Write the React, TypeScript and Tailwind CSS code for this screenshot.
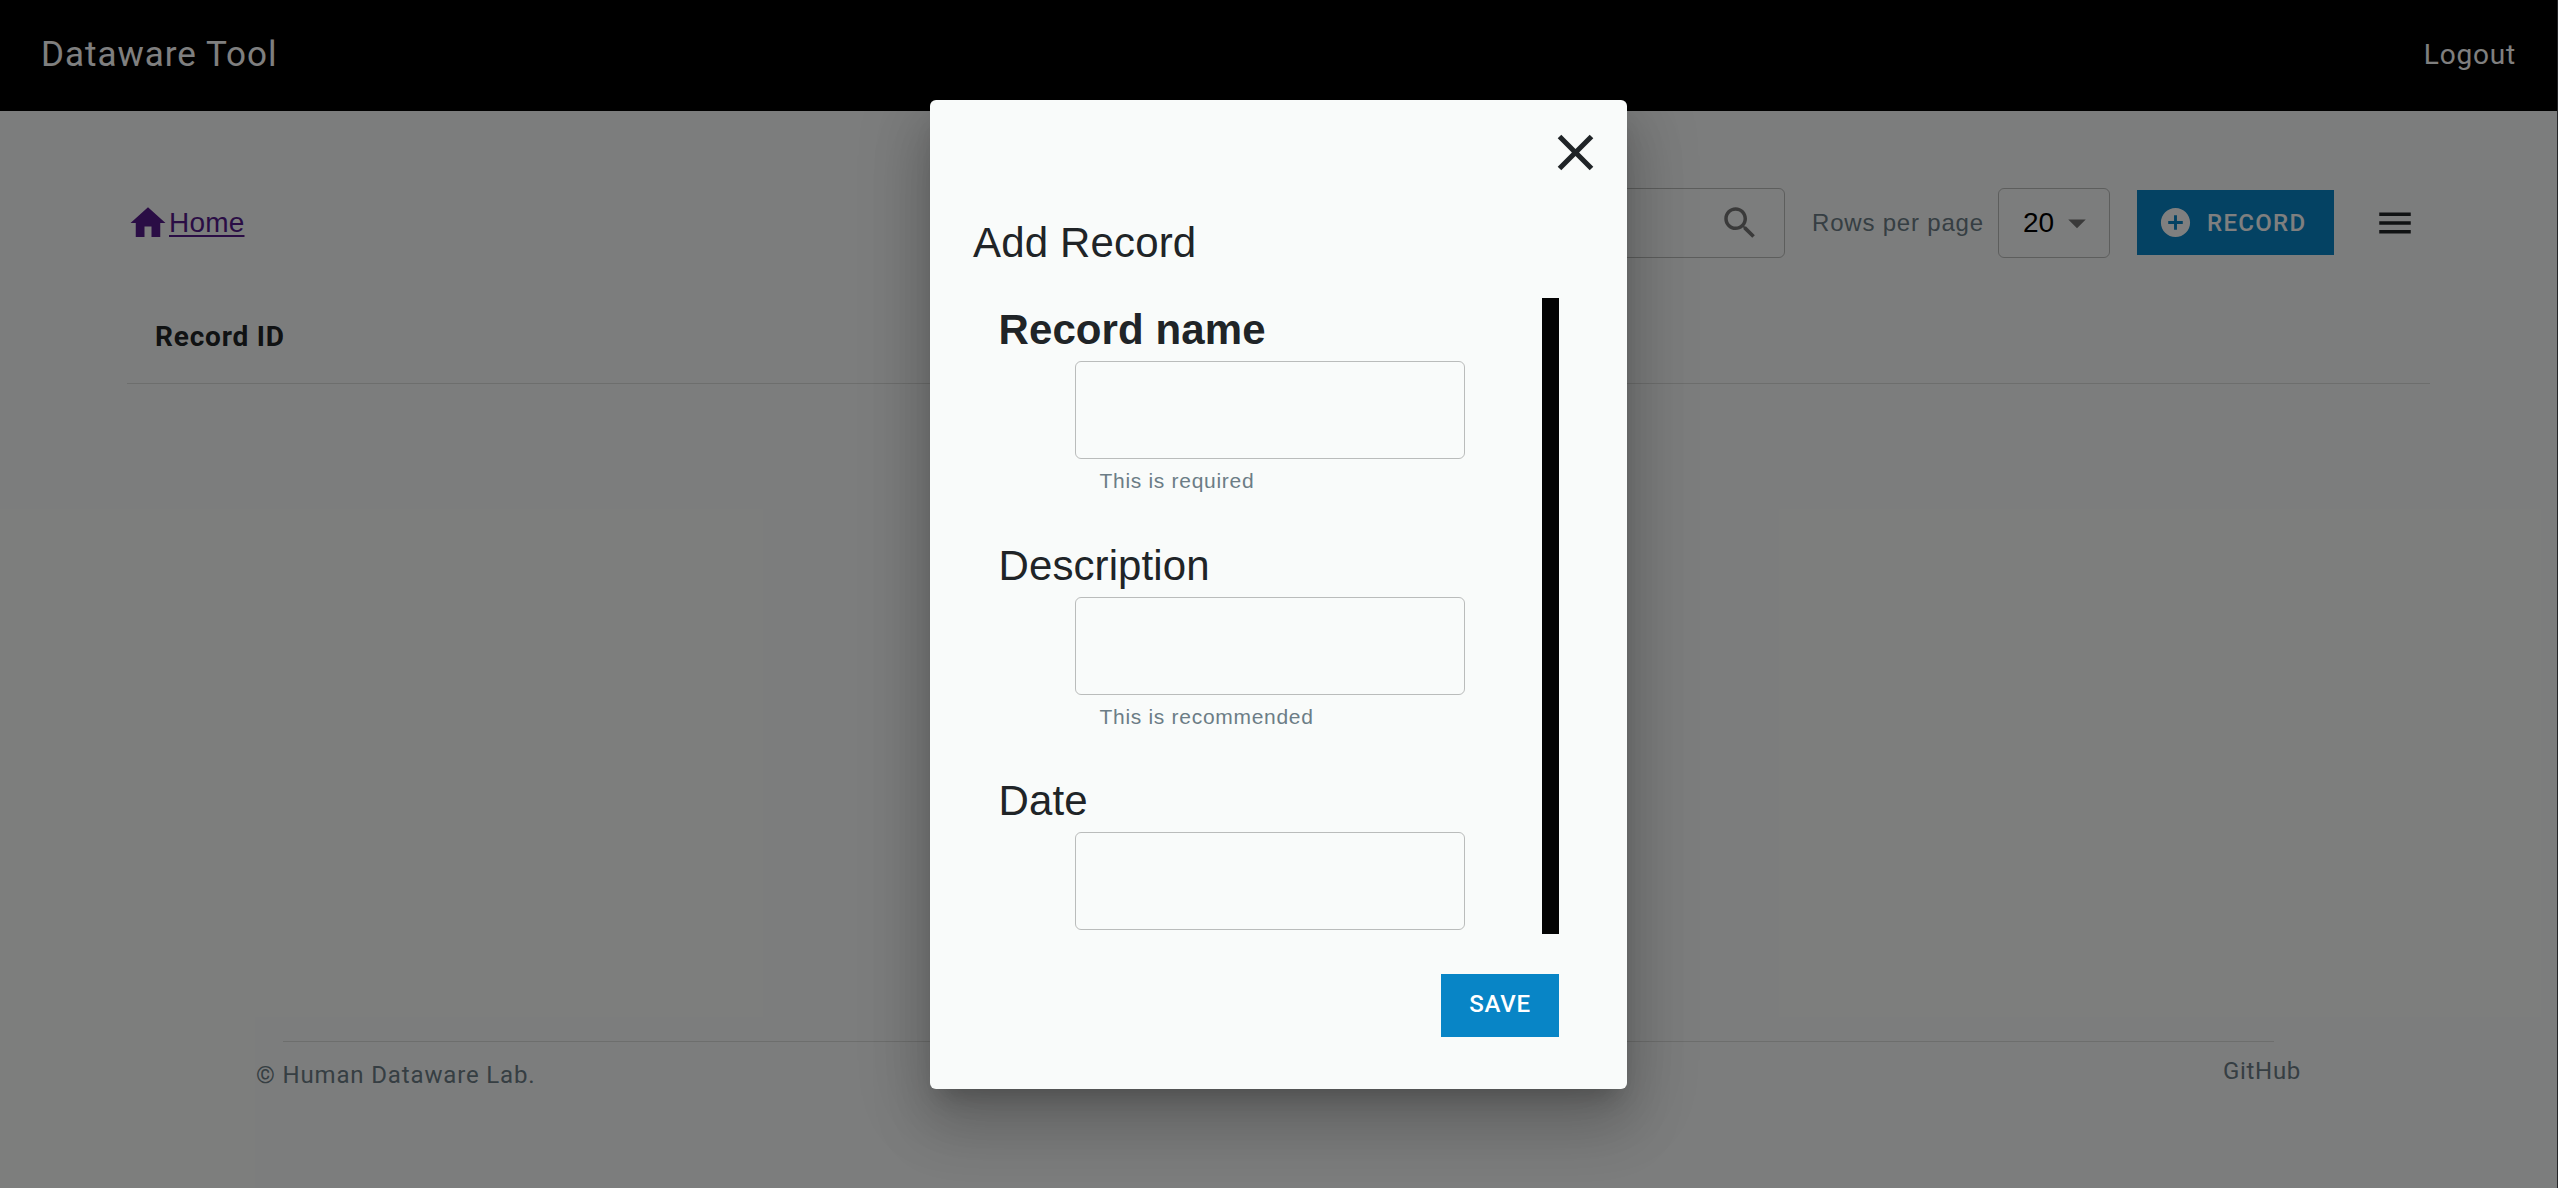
import type { ReactNode } from "react";

function Icon({ d, className }: { d: string; className: string }) {
  return (
    <svg viewBox="0 0 24 24" fill="currentColor" className={`shrink-0 ${className}`}>
      <path d={d} />
    </svg>
  );
}

const ICONS = {
  home: "M10 20v-6h4v6h5v-8h3L12 3 2 12h3v8z",
  search:
    "M15.5 14h-.79l-.28-.27C15.41 12.59 16 11.11 16 9.5 16 5.91 13.09 3 9.5 3S3 5.91 3 9.5 5.91 16 9.5 16c1.61 0 3.09-.59 4.23-1.57l.27.28v.79l5 4.99L20.49 19l-4.99-5zm-6 0C7.01 14 5 11.99 5 9.5S7.01 5 9.5 5 14 7.01 14 9.5 11.99 14 9.5 14z",
  dropDown: "M7 10l5 5 5-5z",
  addCircle:
    "M12 2C6.48 2 2 6.48 2 12s4.48 10 10 10 10-4.48 10-10S17.52 2 12 2zm5 11h-4v4h-2v-4H7v-2h4V7h2v4h4v2z",
  menu: "M3 18h18v-2H3v2zm0-5h18v-2H3v2zm0-7v2h18V6H3z",
  close:
    "M19 6.41L17.59 5 12 10.59 6.41 5 5 6.41 10.59 12 5 17.59 6.41 19 12 13.41 17.59 19 19 17.59 13.41 12z",
};

function Header() {
  return (
    <header className="flex h-[111px] shrink-0 items-center justify-between bg-black pr-[41px] pl-[41px] font-[Roboto,sans-serif] text-white">
      <h1 className="pb-[2px] text-[35px] leading-[48px] tracking-[1px]">Dataware Tool</h1>
      <a className="pb-[2px] text-[28px] leading-[40px] tracking-[0.8px]">Logout</a>
    </header>
  );
}

function Toolbar() {
  return (
    <div className="flex h-[70px] items-center justify-between">
      <a className="flex items-center text-[28px] leading-[40px] tracking-[0.2px] text-[#551a8b]">
        <Icon d={ICONS.home} className="size-[42px]" />
        <span className="underline decoration-2 underline-offset-[3px]">Home</span>
      </a>
      <div className="flex items-center pr-[13px]">
        <div className="flex h-[70px] w-[420px] items-center justify-end rounded-[6px] border border-black/25 pr-[23px] text-[#757575]">
          <Icon d={ICONS.search} className="size-[42px]" />
        </div>
        <span className="ml-[27px] w-[186px] text-[24px] leading-[36px] tracking-[0.8px] whitespace-nowrap text-[#6c7d86]">
          Rows per page
        </span>
        <div className="flex h-[70px] w-[112px] items-center justify-between rounded-[6px] border border-black/25 pr-[11px] pl-[24px]">
          <span className="text-[28px] leading-[40px] text-black">20</span>
          <Icon d={ICONS.dropDown} className="size-[42px] text-[#757575]" />
        </div>
        <button className="mb-px ml-[27px] flex h-[65px] w-[197px] items-center bg-[#0885c6] pl-[21px] font-[Roboto,sans-serif] text-[24px] leading-[42px] font-medium tracking-[1.3px] text-white">
          <Icon d={ICONS.addCircle} className="mr-[14px] size-[35px]" />
          RECORD
        </button>
        <Icon d={ICONS.menu} className="ml-[40px] size-[42px] text-[#202427]" />
      </div>
    </div>
  );
}

function RecordTable() {
  return (
    <div className="mt-[32px] -mr-px flex h-[94px] items-center border-b border-black/12 pl-[28px]">
      <span className="pt-[1px] font-[Roboto,sans-serif] text-[28px] leading-[40px] font-bold tracking-[0.8px]">
        Record ID
      </span>
    </div>
  );
}

function Footer() {
  return (
    <footer className="mx-[256px] mt-auto h-[147px] font-[Roboto,sans-serif] text-[24px] leading-[36px] text-[#6c7d86]">
      <div className="mr-[27px] ml-[27px] h-px bg-black/12" />
      <div className="flex items-start justify-between">
        <span className="mt-[15px] tracking-[0.85px]">© Human Dataware Lab.</span>
        <span className="mt-[11px] tracking-[0.7px]">GitHub</span>
      </div>
    </footer>
  );
}

function Field({ label, helper }: { label: ReactNode; helper?: string }) {
  return (
    <div className="h-[235.5px] shrink-0 pl-[25px]">
      <div className="h-[55px] pl-[0.5px] text-[42px] leading-[48px] tracking-[0.1px]">{label}</div>
      <div className="ml-[77px] w-[390px]">
        <div className="h-[98px] rounded-[6px] border border-black/25" />
        {helper && (
          <p className="mt-[4px] pl-[24.5px] text-[21px] leading-[35px] tracking-[0.7px] text-[#6c7d86]">{helper}</p>
        )}
      </div>
    </div>
  );
}

function AddRecordDialog() {
  return (
    <div
      role="dialog"
      className="flex h-[989px] w-[697px] flex-col rounded-[6px] bg-[#f9fbfa] shadow-[0_16.5px_22.5px_-10.5px_rgba(0,0,0,0.2),0_36px_57px_4.5px_rgba(0,0,0,0.14),0_13.5px_69px_12px_rgba(0,0,0,0.12)]"
    >
      <div className="flex h-[83px] justify-end pt-[22px] pr-[21.5px]">
        <Icon d={ICONS.close} className="size-[61px]" />
      </div>
      <h2 className="mt-[36px] h-[79px] pl-[43px] text-[42px] leading-[48px] tracking-[0.15px]">Add Record</h2>
      <div className="ml-[43px] flex h-[636px] w-[586px] justify-between overflow-hidden">
        <div className="flex flex-1 flex-col pt-[8px]">
          <Field label={<strong>Record name</strong>} helper="This is required" />
          <Field label="Description" helper="This is recommended" />
          <Field label="Date" />
        </div>
        <div className="w-[17px] bg-[#040404]" />
      </div>
      <div className="mt-[40px] mr-[68px] flex justify-end">
        <button className="h-[63px] w-[118px] bg-[#0885c6] pb-[3px] font-[Roboto,sans-serif] text-[24px] font-medium tracking-[0.8px] text-white">
          SAVE
        </button>
      </div>
    </div>
  );
}

export default function App() {
  return (
    <div className="relative flex h-[1188px] w-[2558px] overflow-hidden font-['Liberation_Sans',Arial,sans-serif] text-[#202427]">
      <div className="flex flex-1 flex-col bg-[#f9fbfa]">
        <Header />
        <main className="mt-[77px] mr-[128px] ml-[127px]">
          <Toolbar />
          <RecordTable />
        </main>
        <Footer />
      </div>
      <div className="w-px bg-[#484b50]" />
      <div className="absolute inset-0 flex items-start bg-black/50 pt-[100px] pl-[930px]">
        <AddRecordDialog />
      </div>
    </div>
  );
}
